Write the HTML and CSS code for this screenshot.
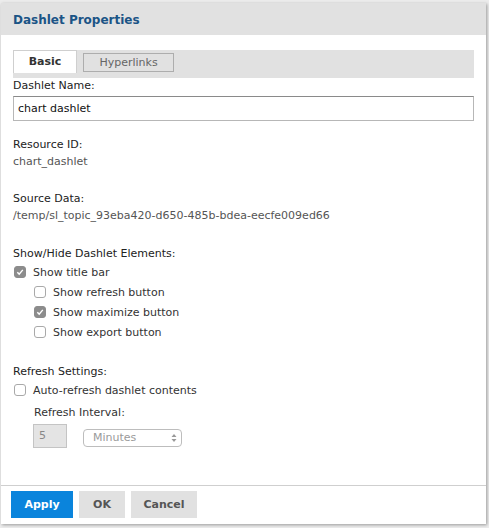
FILE: index.html
```html
<!DOCTYPE html>
<html>
<head>
<meta charset="utf-8">
<link rel="stylesheet" href="styles.css">
</head>
<body>
<div class="dialog">
  <div class="header">Dashlet Properties</div>
  <div class="content">
    <div class="tabs">
      <div class="tab active">Basic</div>
      <div class="tab">Hyperlinks</div>
    </div>
    <div class="label">Dashlet Name:</div>
    <div class="input">chart dashlet</div>

    <div class="label sec">Resource ID:</div>
    <div class="value">chart_dashlet</div>

    <div class="label sec2">Source Data:</div>
    <div class="value">/temp/sl_topic_93eba420-d650-485b-bdea-eecfe009ed66</div>

    <div class="label sec3">Show/Hide Dashlet Elements:</div>
    <div class="check"><span class="box on"><svg viewBox="0 0 12 12" width="12" height="12"><path d="M3.3 6.2 L5.2 8.1 L8.8 3.9" fill="none" stroke="#fff" stroke-width="1.4"/></svg></span>Show title bar</div>
    <div class="check sub"><span class="box"></span>Show refresh button</div>
    <div class="check sub"><span class="box on"><svg viewBox="0 0 12 12" width="12" height="12"><path d="M3.3 6.2 L5.2 8.1 L8.8 3.9" fill="none" stroke="#fff" stroke-width="1.4"/></svg></span>Show maximize button</div>
    <div class="check sub"><span class="box"></span>Show export button</div>

    <div class="label sec4">Refresh Settings:</div>
    <div class="check"><span class="box"></span>Auto-refresh dashlet contents</div>
    <div class="interval">
      <div class="label ilabel">Refresh Interval:</div>
      <div class="irow">
        <div class="num">5</div>
        <div class="select">Minutes<svg class="arrows" viewBox="0 0 6 10" width="6" height="10"><path d="M0.5 4 L3 1 L5.5 4 Z M0.5 6 L3 9 L5.5 6 Z" fill="#999"/></svg></div>
      </div>
    </div>
  </div>
  <div class="footer">
    <div class="btn primary">Apply</div>
    <div class="btn ok">OK</div>
    <div class="btn cancel">Cancel</div>
  </div>
</div>
</body>
</html>
```
FILE: styles.css
```css
html, body {
  margin: 0;
  padding: 0;
}
body {
  width: 489px;
  height: 528px;
  background: #ececec;
  font-family: "DejaVu Sans", Verdana, sans-serif;
  font-size: 11px;
  color: #222;
  overflow: hidden;
}
.dialog {
  margin: 3px 0 0 1px;
  width: 485px;
  height: 521px;
  background: #fff;
  box-shadow: 1px 1px 3px rgba(0,0,0,0.35);
  display: flex;
  flex-direction: column;
}
.header {
  height: 29px;
  padding-top: 3px;
  background: #e1e1e1;
  color: #1b5486;
  font-weight: bold;
  font-size: 12px;
  line-height: 29px;
  padding-left: 12px;
}
.content {
  flex: 1;
  padding: 15px 12px 0 12px;
}
.tabs {
  height: 28px;
  background: #e1e1e1;
  display: flex;
  align-items: flex-start;
  gap: 6px;
}
.tab {
  box-sizing: border-box;
  margin-top: 3px;
  height: 19px;
  width: 91px;
  text-align: center;
  border: 1px solid #adadad;
  color: #666;
  line-height: 17px;
  font-size: 11px;
  background: #e1e1e1;
}
.tab.active {
  margin-top: 0;
  height: 23px;
  width: 64px;
  background: #fff;
  border: 1px solid #cfcfcf;
  border-bottom: none;
  color: #333;
  font-weight: bold;
  line-height: 22px;
}
.label {
  line-height: 16px;
  color: #222;
}
.input {
  box-sizing: border-box;
  margin-top: 2px;
  height: 25px;
  border: 1px solid #b7b7b7;
  border-top-color: #8a8a8a;
  padding-left: 4px;
  line-height: 23px;
  font-size: 11px;
  color: #111;
}
.value {
  line-height: 16px;
  color: #555;
  margin-top: 1px;
}
.sec { margin-top: 16px; }
.sec2 { margin-top: 21px; }
.sec3 { margin-top: 22px; }
.sec4 { margin-top: 22px; }
.check {
  display: flex;
  align-items: center;
  height: 20px;
  color: #333;
}
.check.sub {
  padding-left: 20px;
}
.box {
  box-sizing: border-box;
  width: 12px;
  height: 12px;
  border: 1px solid #a9a9a9;
  border-radius: 3px;
  background: #fff;
  margin: 0 7px 0 1px;
  display: flex;
}
.box.on {
  background: #8c8c8c;
  border-color: #8c8c8c;
}
.box svg {
  margin: -1px;
}
.interval {
  padding-left: 21px;
  margin-top: 5px;
}
.ilabel {
  color: #333;
}
.irow {
  display: flex;
  align-items: flex-start;
  gap: 16px;
  margin-top: 3px;
}
.num {
  box-sizing: border-box;
  width: 34px;
  height: 24px;
  background: #e4e4e4;
  border: 1px solid #c4c4c4;
  color: #888;
  padding-left: 5px;
  line-height: 22px;
  margin-left: -1px;
}
.select {
  box-sizing: border-box;
  width: 99px;
  height: 18px;
  margin-top: 5px;
  border: 1px solid #bdbdbd;
  border-radius: 4px;
  color: #9a9a9a;
  padding-left: 9px;
  line-height: 16px;
  display: flex;
  align-items: center;
  justify-content: space-between;
  padding-right: 4px;
}
.footer {
  height: 39px;
  border-top: 1px solid #cfcfcf;
  display: flex;
  gap: 6px;
  padding: 5px 0 0 10px;
  box-sizing: border-box;
}
.btn {
  height: 27px;
  line-height: 27px;
  background: #e1e1e1;
  color: #555;
  font-weight: bold;
  font-size: 11px;
  text-align: center;
}
.btn.primary {
  background: #0a84dc;
  color: #fff;
  width: 62px;
}
.btn.ok { width: 46px; }
.btn.cancel { width: 66px; }
```
